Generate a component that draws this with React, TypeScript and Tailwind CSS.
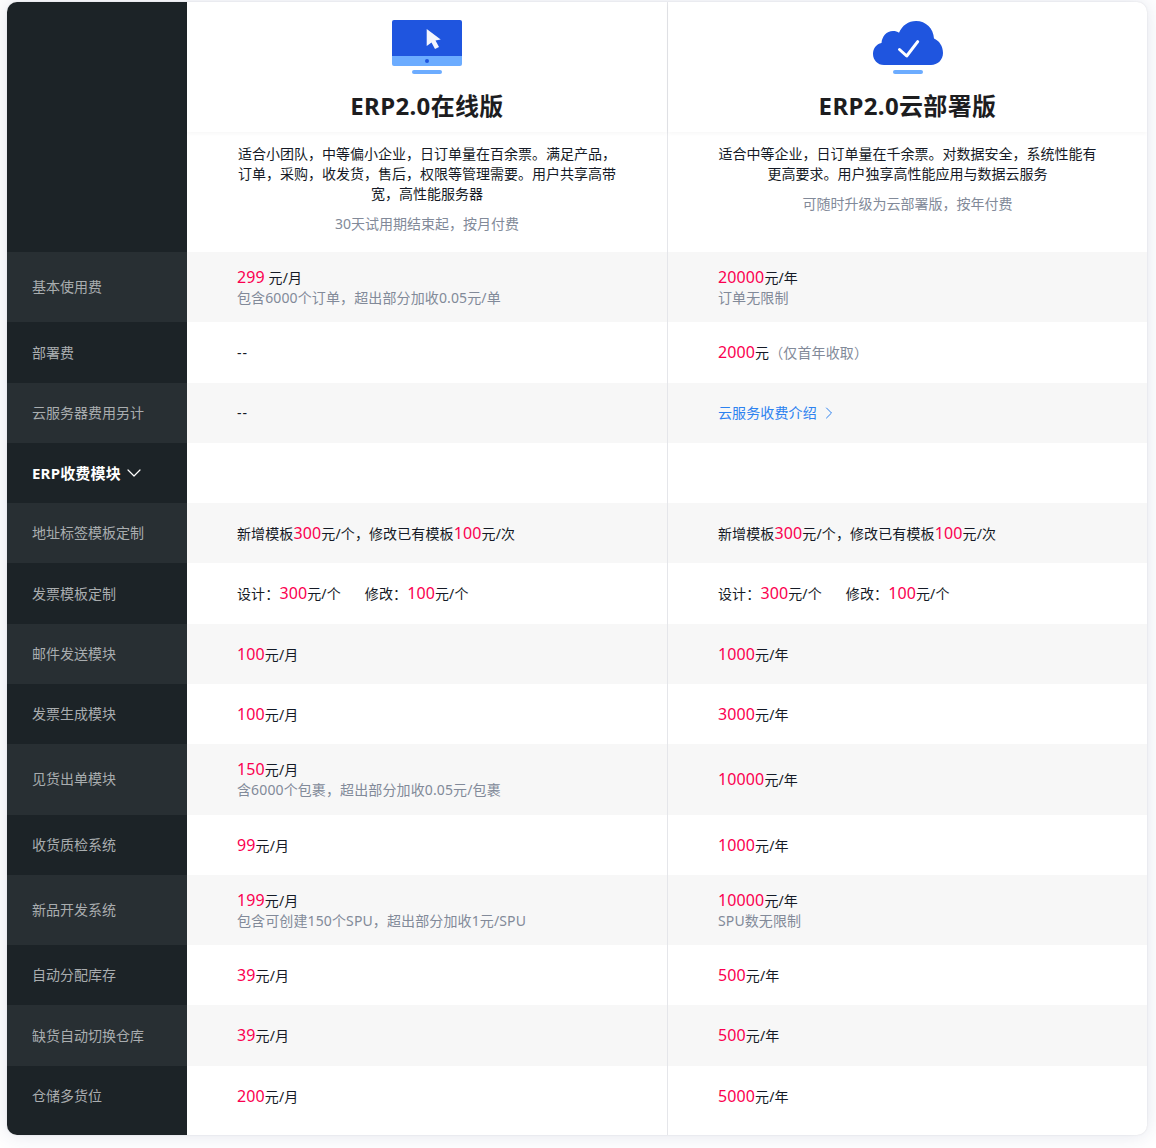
type Cell = { price?: string; unit?: string; note?: string; raw?: React.ReactNode }
type Row = { label: string; h: string; left: Cell; right: Cell; bold?: boolean }

import React from 'react'
import { ChevronDown, ChevronRight } from 'lucide-react'

const Red = ({ children }: { children: React.ReactNode }) => (
  <span className="text-[16px] text-[#fb0050]">{children}</span>
)

const template = (
  <span>
    新增模板<Red>300</Red>元/个，修改已有模板<Red>100</Red>元/次
  </span>
)

const invoice = (
  <span>
    设计：<Red>300</Red>元/个<span className="ml-6">修改：</span><Red>100</Red>元/个
  </span>
)

const dash = <span className="tracking-[1px]">--</span>

const rows: Row[] = [
  {
    label: '基本使用费',
    h: 'h-[70px]',
    left: { price: '299', unit: ' 元/月', note: '包含6000个订单，超出部分加收0.05元/单' },
    right: { price: '20000', unit: '元/年', note: '订单无限制' },
  },
  {
    label: '部署费',
    h: 'h-[61px]',
    left: { raw: dash },
    right: {
      raw: (
        <span>
          <Red>2000</Red>元<span className="text-[#828a99]">（仅首年收取）</span>
        </span>
      ),
    },
  },
  {
    label: '云服务器费用另计',
    h: 'h-[60px]',
    left: { raw: dash },
    right: {
      raw: (
        <span className="flex items-center text-[#2d82f0]">
          云服务收费介绍
          <ChevronRight className="ml-[2px] h-[20px] w-[20px]" strokeWidth={1.2} />
        </span>
      ),
    },
  },
  { label: 'ERP收费模块', h: 'h-[60px]', bold: true, left: {}, right: {} },
  { label: '地址标签模板定制', h: 'h-[60px]', left: { raw: template }, right: { raw: template } },
  { label: '发票模板定制', h: 'h-[61px]', left: { raw: invoice }, right: { raw: invoice } },
  { label: '邮件发送模块', h: 'h-[60px]', left: { price: '100', unit: '元/月' }, right: { price: '1000', unit: '元/年' } },
  { label: '发票生成模块', h: 'h-[60px]', left: { price: '100', unit: '元/月' }, right: { price: '3000', unit: '元/年' } },
  {
    label: '见货出单模块',
    h: 'h-[71px]',
    left: { price: '150', unit: '元/月', note: '含6000个包裹，超出部分加收0.05元/包裹' },
    right: { price: '10000', unit: '元/年' },
  },
  { label: '收货质检系统', h: 'h-[60px]', left: { price: '99', unit: '元/月' }, right: { price: '1000', unit: '元/年' } },
  {
    label: '新品开发系统',
    h: 'h-[70px]',
    left: { price: '199', unit: '元/月', note: '包含可创建150个SPU，超出部分加收1元/SPU' },
    right: { price: '10000', unit: '元/年', note: 'SPU数无限制' },
  },
  { label: '自动分配库存', h: 'h-[60px]', left: { price: '39', unit: '元/月' }, right: { price: '500', unit: '元/年' } },
  { label: '缺货自动切换仓库', h: 'h-[61px]', left: { price: '39', unit: '元/月' }, right: { price: '500', unit: '元/年' } },
  { label: '仓储多货位', h: 'h-[60px]', left: { price: '200', unit: '元/月' }, right: { price: '5000', unit: '元/年' } },
]

function PriceCell({ cell }: { cell: Cell }) {
  return (
    <div className="flex flex-col justify-center pl-[50px] text-[14px] leading-[20px] tracking-[0.12px] text-[#151a26]">
      {cell.raw ? (
        <div>{cell.raw}</div>
      ) : cell.price ? (
        <div>
          <Red>{cell.price}</Red>
          {cell.unit}
        </div>
      ) : null}
      {cell.note && <div className="text-[#828a99]">{cell.note}</div>}
    </div>
  )
}

function MonitorIcon() {
  return (
    <svg width="70" height="54" viewBox="0 0 70 54">
      <path d="M2 0h66a2 2 0 0 1 2 2v34H0V2a2 2 0 0 1 2-2z" fill="#1f55df" />
      <path d="M0 36h70v8a2 2 0 0 1-2 2H2a2 2 0 0 1-2-2z" fill="#6cacff" />
      <circle cx="35" cy="41" r="2" fill="#1f55df" />
      <rect x="20" y="50" width="30" height="4" rx="2" fill="#6cacff" />
      <path d="M34.700 9L48.700 19.500L43.500 20.500L47 27L43 29L39.500 22.500L34.700 26z" fill="#f3f5fd" />
    </svg>
  )
}

function CloudIcon() {
  return (
    <svg width="70" height="54" viewBox="0 0 70 54">
      <path
        d="M11 45C4.500 45 0 40 0 34c0-5.500 3.500-10 8.500-11C9 16.500 13.500 11 20 11c2.500 0 4.500.6 6 1.800C29 5.500 35.500 1 43 1c10 0 17.500 7.500 18 17.500 5 2 9 7.500 9 14.500 0 7-5.500 12-12 12z"
        fill="#1f55df"
      />
      <path d="M26.500 29.500l7.200 6.500L44.700 21.700" fill="none" stroke="#fff" strokeWidth="3" strokeLinecap="round" strokeLinejoin="round" />
      <rect x="20" y="50" width="30" height="4" rx="2" fill="#6cacff" />
    </svg>
  )
}

export default function App() {
  return (
    <div className="h-[1148px] w-[1156px] bg-white pl-[7px] pt-[2px] font-['Noto_Sans','Noto_Sans_CJK_SC',sans-serif]">
      <div className="flex w-[1140px] overflow-hidden rounded-[10px] bg-white shadow-[0_0_2px_rgba(0,0,0,0.1),0_0_20px_rgba(40,60,120,0.14)]">
        <div className="flex w-full flex-col">
          <div className="flex h-[250px]">
            <div className="w-[180px] bg-[#1c2327]" />
            <div className="flex w-[481px] flex-col items-center border-r border-[#e5e6ea]">
              <div className="flex h-[130px] w-full flex-col items-center pt-[18px] shadow-[0_2px_4px_rgba(0,0,0,0.03)]">
                <MonitorIcon />
                <h2 className="mt-[16px] text-[24px] leading-[32px] font-bold tracking-[0.35px] text-[#1d1d1f]">ERP2.0在线版</h2>
              </div>
              <p className="mt-[12px] w-[384px] text-center text-[14px] leading-[20px] text-[#151a26]">
                适合小团队，中等偏小企业，日订单量在百余票。满足产品，订单，采购，收发货，售后，权限等管理需要。用户共享高带宽，高性能服务器
              </p>
              <p className="mt-[10px] text-[14px] leading-[20px] text-[#828a99]">30天试用期结束起，按月付费</p>
            </div>
            <div className="flex w-[479px] flex-col items-center">
              <div className="flex h-[130px] w-full flex-col items-center pt-[18px] shadow-[0_2px_4px_rgba(0,0,0,0.03)]">
                <CloudIcon />
                <h2 className="mt-[16px] text-[24px] leading-[32px] font-bold tracking-[0.35px] text-[#1d1d1f]">ERP2.0云部署版</h2>
              </div>
              <p className="mt-[12px] w-[384px] text-center text-[14px] leading-[20px] text-[#151a26]">
                适合中等企业，日订单量在千余票。对数据安全，系统性能有更高要求。用户独享高性能应用与数据云服务
              </p>
              <p className="mt-[10px] text-[14px] leading-[20px] text-[#828a99]">可随时升级为云部署版，按年付费</p>
            </div>
          </div>

          {rows.map((row, i) => {
            const odd = i % 2 === 0
            return (
              <div key={row.label} className={`flex ${row.h} ${odd ? 'bg-[#f7f7f7]' : 'bg-white'}`}>
                <div
                  className={`flex w-[180px] items-center pl-[25px] ${odd ? 'bg-[#282f33]' : 'bg-[#1c2327]'} ${
                    row.bold ? 'text-[15px] font-bold tracking-[0.2px] text-white' : 'text-[14px] text-[#a9adaf]'
                  } ${row.bold || row.h === 'h-[61px]' ? '' : 'pb-[2px]'}`}
                >
                  {row.label}
                  {row.bold && <ChevronDown className="ml-px h-[24px] w-[24px]" strokeWidth={1.2} />}
                </div>
                <div className="flex w-[481px] border-r border-[#e5e6ea]">
                  <PriceCell cell={row.left} />
                </div>
                <div className="flex w-[479px]">
                  <PriceCell cell={row.right} />
                </div>
              </div>
            )
          })}
          <div className="flex h-[9px]">
            <div className="w-[180px] bg-[#1c2327]" />
            <div className="w-[481px] border-r border-[#e5e6ea]" />
          </div>
        </div>
      </div>
    </div>
  )
}
